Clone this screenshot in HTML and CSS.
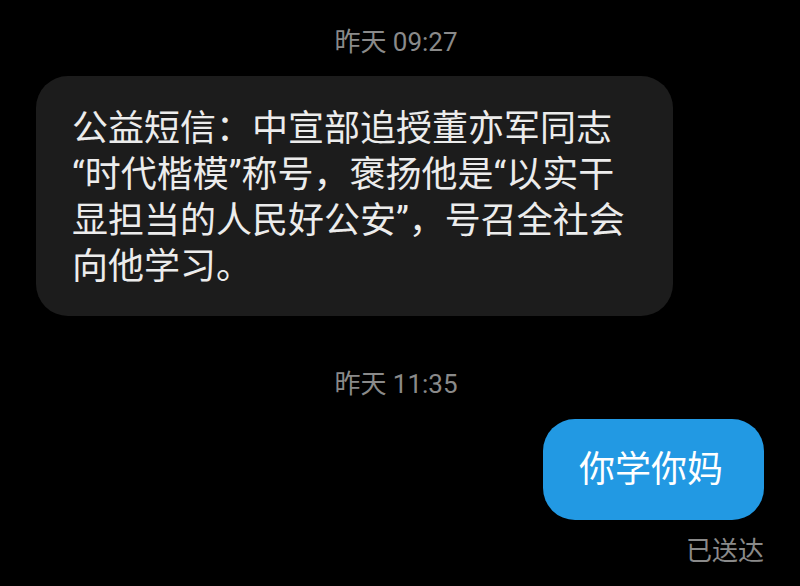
FILE: index.html
```html
<!DOCTYPE html>
<html lang="zh-CN">
<head>
    <meta charset="UTF-8">
    <meta name="viewport" content="width=device-width, initial-scale=1.0">
    <title>短信</title>
    <link rel="stylesheet" href="styles.css">
</head>
<body>
    <div class="thread">
        <!-- received -->
        <p class="stamp stamp-first">昨天 09:27</p>
        <div class="bubble bubble-in">公益短信：中宣部追授董亦军同志“时代楷模”称号，褒扬他是“以实干显担当的人民好公安”，号召全社会向他学习。</div>

        <!-- sent -->
        <p class="stamp">昨天 11:35</p>
        <div class="bubble bubble-out">你学你妈</div>
        <p class="status">已送达</p>
    </div>
</body>
</html>
```

FILE: styles.css
```css
body {
    margin: 0;
    background-color: #000;
    font-family: 'Noto Sans CJK SC', sans-serif;
}
.thread {
    display: flex;
    flex-direction: column;
    padding: 27px 36px 0;
}
.stamp {
    margin: 53px 0 0;
    font-family: Roboto, 'Noto Sans CJK SC', sans-serif;
    font-size: 26px;
    line-height: 30px;
    color: #8a8a8a;
    text-align: center;
    padding-right: 8px;
}
.stamp-first {
    margin-top: 0;
}
.bubble {
    font-family: Roboto, 'Noto Sans CJK SC', sans-serif;
    font-size: 36px;
    line-height: 46px;
    border-radius: 32px;
}
.bubble-in {
    align-self: flex-start;
    box-sizing: border-box;
    width: 637px;
    margin-top: 19px;
    padding: 30px 40px 26px 36px;
    background-color: #1c1c1c;
    color: #ececec;
}
.bubble-out {
    align-self: flex-end;
    margin-top: 20px;
    padding: 28px 41px 27px 36px;
    background-color: #2299e3;
    color: #fff;
}
.status {
    align-self: flex-end;
    margin: 14px 0 0;
    font-size: 26px;
    line-height: 30px;
    color: #8a8a8a;
}
```
